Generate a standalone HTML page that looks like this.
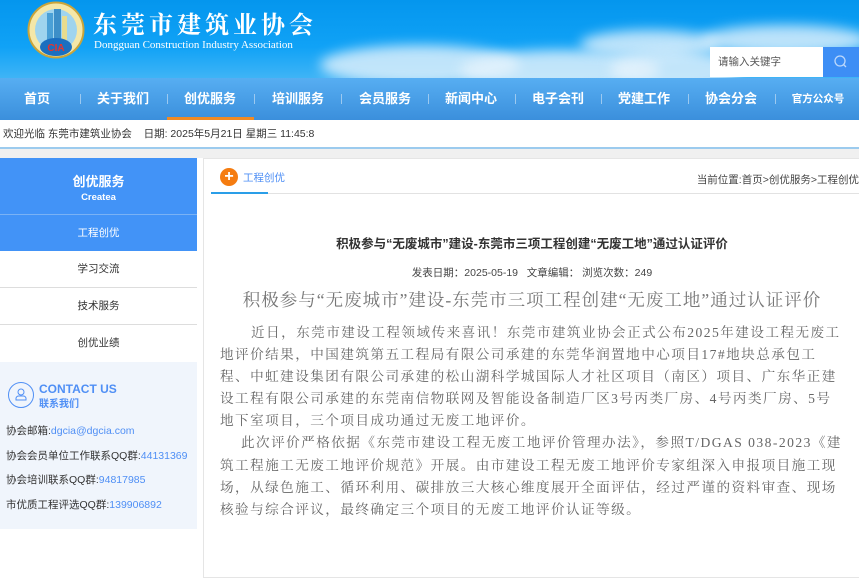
<!DOCTYPE html>
<html><head><meta charset="utf-8"><style>
*{margin:0;padding:0;box-sizing:border-box}
body{width:859px;height:566px;overflow:hidden;background:#fff;font-family:"Liberation Sans","Noto Sans CJK SC",sans-serif;position:relative}
.hdr{position:absolute;left:0;top:0;width:859px;height:78px;background:linear-gradient(180deg,#0496ee 0%,#10a2f6 60%,#3fb4f6 100%);overflow:hidden}
.cloud{position:absolute;background:#e6f3fc;border-radius:50%;filter:blur(6px);opacity:.8}
.nav{position:absolute;left:0;top:78px;width:859px;height:42px;background:linear-gradient(180deg,#57aef2,#3b8fdc)}
.nav span{position:absolute;top:0;line-height:42px;color:#fff;font-weight:bold;font-size:13px;transform:translateX(-50%);white-space:nowrap}
.nav i{position:absolute;top:16px;width:1px;height:10px;background:#9cc9f0}
.info{position:absolute;left:0;top:120px;width:859px;height:29px;border-bottom:2px solid #9ccbee;font-size:10.5px;color:#333;line-height:28px;padding-left:3px}
.gap{position:absolute;left:0;top:149px;width:859px;height:9px;background:#f0f0f0}
.side{position:absolute;left:0;top:158px;width:197px}
.sh{height:57px;background:#4293f7;color:#fff;text-align:center;border-bottom:1px solid #7ab2f5}
.si{height:37px;line-height:36px;text-align:center;font-size:10.5px;color:#333;border-bottom:1px solid #ddd;background:#fff}
.contact{background:#f0f5fc;height:167px;padding:0 6px;font-size:10.5px;color:#333}
.contact p{height:24.5px;line-height:24.5px}
.contact b{font-weight:normal;color:#4f8ff5}
.main{position:absolute;left:203px;top:158px;width:660px;height:420px;border:1px solid #e5e5e5;border-right:none}
.ser{font-family:"Liberation Serif","Noto Serif CJK SC",serif}
.body{position:absolute;left:16px;top:163px;font-size:13.6px;color:#666;line-height:22.1px;letter-spacing:1.45px;white-space:nowrap}
</style></head><body>
<div class="hdr">
  <div class="cloud" style="left:320px;top:45px;width:200px;height:40px"></div>
  <div class="cloud" style="left:460px;top:50px;width:200px;height:40px"></div>
  <div class="cloud" style="left:580px;top:30px;width:140px;height:28px"></div>
  <div class="cloud" style="left:700px;top:25px;width:170px;height:30px"></div>
  <div class="cloud" style="left:610px;top:50px;width:130px;height:40px"></div>
  <svg style="position:absolute;left:27px;top:1px" width="58" height="58" viewBox="0 0 58 58">
    <circle cx="29" cy="29" r="27.5" fill="#f4e7a8" stroke="#c9a43a" stroke-width="2"/>
    <circle cx="29" cy="29" r="21" fill="#9fd4ee"/>
    <rect x="20" y="12" width="6" height="28" fill="#4aa0d6"/><rect x="27" y="8" width="7" height="32" fill="#3d8fc8"/><rect x="35" y="15" width="5" height="25" fill="#e8dc8e"/>
    <ellipse cx="29" cy="46" rx="16" ry="9" fill="#1b6fc0"/>
    <text x="29" y="50" font-size="10" font-weight="bold" fill="#e8322c" text-anchor="middle" font-family="Liberation Sans">CIA</text>
  </svg>
  <div style="position:absolute;left:93px;top:8px;color:#fff;font-size:24px;font-weight:bold;letter-spacing:4px;font-family:'Noto Serif CJK SC',serif;line-height:30px">东莞市建筑业协会</div>
  <div style="position:absolute;left:94px;top:39px;color:#fff;font-size:11px;font-family:'Liberation Serif',serif">Dongguan Construction Industry Association</div>
  <div style="position:absolute;left:710px;top:47px;width:113px;height:30px;background:#fff;font-size:10.5px;color:#555;line-height:30px;padding-left:8px">请输入关键字</div>
  <div style="position:absolute;left:823px;top:47px;width:36px;height:30px;background:#3d8ef5"><svg width="36" height="30"><circle cx="17" cy="14" r="5" fill="none" stroke="#bcd8fb" stroke-width="1.3"/><line x1="20.5" y1="17.5" x2="23" y2="20" stroke="#bcd8fb" stroke-width="1.3"/></svg></div>
</div>
<div class="nav">
  <span style="left:37px">首页</span><i style="left:80px"></i>
  <span style="left:123px">关于我们</span><i style="left:167px"></i>
  <span style="left:210px">创优服务</span><i style="left:254px"></i>
  <span style="left:298px">培训服务</span><i style="left:341px"></i>
  <span style="left:385px">会员服务</span><i style="left:428px"></i>
  <span style="left:471px">新闻中心</span><i style="left:515px"></i>
  <span style="left:558px">电子会刊</span><i style="left:601px"></i>
  <span style="left:644px">党建工作</span><i style="left:688px"></i>
  <span style="left:731px">协会分会</span><i style="left:775px"></i>
  <span style="left:818px;font-size:10.5px">官方公众号</span>
  <div style="position:absolute;left:167px;top:39px;width:87px;height:3px;background:#f08a24"></div>
</div>
<div class="info">欢迎光临 东莞市建筑业协会 &nbsp;&nbsp;&nbsp;日期: 2025年5月21日 星期三 11:45:8</div>
<div class="gap"></div>
<div class="side">
  <div class="sh"><div style="font-size:13px;font-weight:bold;padding-top:13px">创优服务</div><div style="font-size:9.5px;font-weight:bold;margin-top:2px">Createa</div></div>
  <div class="si" style="background:#4293f7;color:#fff;border-bottom:none;height:36px">工程创优</div>
  <div class="si">学习交流</div>
  <div class="si">技术服务</div>
  <div class="si" style="border-bottom:none">创优业绩</div>
  <div class="contact">
    <div style="position:relative;height:57px">
      <div style="position:absolute;left:2px;top:20px;width:26px;height:26px;border:1px solid #4f8ff5;border-radius:50%"><svg width="24" height="24"><circle cx="12" cy="9" r="3" fill="none" stroke="#4f8ff5"/><path d="M7 17h10v-2a3 3 0 0 0-3-2h-4a3 3 0 0 0-3 2z" fill="none" stroke="#4f8ff5"/></svg></div>
      <div style="position:absolute;left:33px;top:20px;color:#4f8ff5;font-weight:bold;font-size:12px;line-height:14px">CONTACT US<br><span style="font-size:10px">联系我们</span></div>
    </div>
    <p>协会邮箱:<b>dgcia@dgcia.com</b></p>
    <p>协会会员单位工作联系QQ群:<b>44131369</b></p>
    <p>协会培训联系QQ群:<b>94817985</b></p>
    <p>市优质工程评选QQ群:<b>139906892</b></p>
  </div>
</div>
<div class="main">
  <div style="position:absolute;left:16px;top:9px;width:18px;height:18px;border-radius:50%;background:#f57c10;color:#fff;font-weight:bold;font-size:16px;line-height:18px;text-align:center">+</div>
  <div style="position:absolute;left:39px;top:11px;font-size:10.5px;color:#4f8ff5">工程创优</div>
  <div style="position:absolute;left:7px;top:34px;width:648px;height:1px;background:#e2e2e2"></div>
  <div style="position:absolute;left:7px;top:33px;width:57px;height:2px;background:#2a9ee8"></div>
  <div style="position:absolute;right:4px;top:13px;font-size:10.5px;color:#444">当前位置:首页&gt;创优服务&gt;工程创优</div>
  <div style="position:absolute;left:0;width:656px;top:74px;text-align:center;font-size:12.5px;font-weight:bold;color:#333">积极参与“无废城市”建设-东莞市三项工程创建“无废工地”通过认证评价</div>
  <div style="position:absolute;left:0;width:656px;top:106px;text-align:center;font-size:10.5px;color:#444">发表日期：2025-05-19 &nbsp;&nbsp;文章编辑： 浏览次数：249</div>
  <div class="ser" style="position:absolute;left:0;width:656px;top:128px;text-align:center;font-size:17.5px;color:#777;letter-spacing:1px">积极参与“无废城市”建设-东莞市三项工程创建“无废工地”通过认证评价</div>
  <div class="body ser"><span style="display:inline-block;width:31px"></span>近日，东莞市建设工程领域传来喜讯！东莞市建筑业协会正式公布2025年建设工程无废工<br>地评价结果，中国建筑第五工程局有限公司承建的东莞华润置地中心项目17#地块总承包工<br>程、中虹建设集团有限公司承建的松山湖科学城国际人才社区项目（南区）项目、广东华正建<br>设工程有限公司承建的东莞南信物联网及智能设备制造厂区3号丙类厂房、4号丙类厂房、5号<br>地下室项目，三个项目成功通过无废工地评价。<br><span style="display:inline-block;width:21px"></span>此次评价严格依据《东莞市建设工程无废工地评价管理办法》，参照T/DGAS 038-2023《建<br>筑工程施工无废工地评价规范》开展。由市建设工程无废工地评价专家组深入申报项目施工现<br>场，从绿色施工、循环利用、碳排放三大核心维度展开全面评估，经过严谨的资料审查、现场<br>核验与综合评议，最终确定三个项目的无废工地评价认证等级。</div>
</div>
</body></html>
